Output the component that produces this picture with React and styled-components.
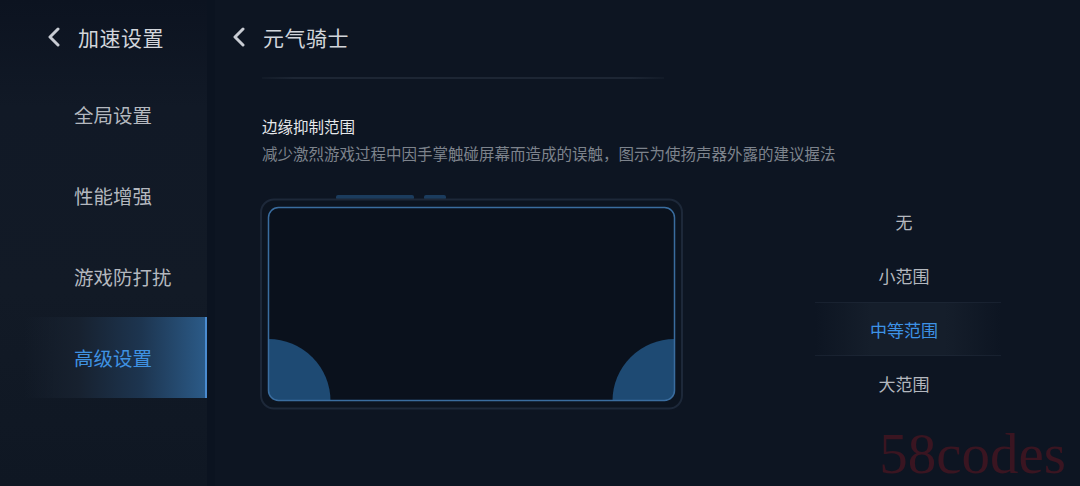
import React, { useState } from "react";
import styled, { createGlobalStyle } from "styled-components";

const GlobalStyle = createGlobalStyle`
  html, body {
    margin: 0;
    padding: 0;
    background: #0d1522;
  }
  body {
    font-family: "Noto Sans CJK SC", "Noto Sans", sans-serif;
  }
`;

const menu = ["全局设置", "性能增强", "游戏防打扰", "高级设置"];
const ranges = ["无", "小范围", "中等范围", "大范围"];

const Chevron = () => (
  <svg width="14" height="20" viewBox="0 0 14 20">
    <path d="M11 2 L3 10 L11 18" fill="none" stroke="#c8ccd3" strokeWidth="3" strokeLinecap="round" strokeLinejoin="round" />
  </svg>
);

const PhoneDiagram = () => (
  <svg width="426" height="216" viewBox="0 0 426 216">
    <defs>
      <clipPath id="screen">
        <rect x="8.5" y="13.5" width="406" height="193" rx="10" />
      </clipPath>
    </defs>
    <rect x="76" y="1" width="78" height="5" rx="2" fill="#1b3c5e" />
    <rect x="164" y="1" width="22" height="5" rx="2" fill="#1b3c5e" />
    <rect x="1" y="5.5" width="421" height="209" rx="13" fill="#0c1420" stroke="#1d2839" strokeWidth="2" />
    <rect x="8.5" y="13.5" width="406" height="193" rx="10" fill="#0a111c" />
    <g clipPath="url(#screen)" fill="#1e4a73">
      <path d="M8.5 145 A62 62 0 0 1 70.5 207 L8.5 207 Z" />
      <path d="M414.5 145 A62 62 0 0 0 352.5 207 L414.5 207 Z" />
    </g>
    <rect x="8.5" y="13.5" width="406" height="193" rx="10" fill="none" stroke="#3a6d9f" strokeWidth="1.5" />
  </svg>
);

export default function App() {
  const [active, setActive] = useState(3);
  const [range, setRange] = useState(2);

  return (
    <Page>
      <GlobalStyle />
      <Sidebar>
        <Header>
          <Chevron />
          <HeaderTitle>加速设置</HeaderTitle>
        </Header>
        {menu.map((label, i) => (
          <NavItem key={label} $active={i === active} onClick={() => setActive(i)}>
            {label}
          </NavItem>
        ))}
      </Sidebar>

      <Main>
        <MainHeader>
          <Chevron />
          <HeaderTitle>元气骑士</HeaderTitle>
        </MainHeader>
        <Content>
          <Divider />
          <SectionTitle>边缘抑制范围</SectionTitle>
          <SectionDesc>减少激烈游戏过程中因手掌触碰屏幕而造成的误触，图示为使扬声器外露的建议握法</SectionDesc>
          <Row>
            <Diagram>
              <PhoneDiagram />
            </Diagram>
            <Options>
              {ranges.map((label, i) => (
                <Option key={label} $selected={i === range} onClick={() => setRange(i)}>
                  {label}
                </Option>
              ))}
            </Options>
          </Row>
        </Content>
      </Main>

      <Watermark>58codes</Watermark>
    </Page>
  );
}

const Page = styled.div`
  position: relative;
  display: flex;
  width: 1080px;
  height: 486px;
  overflow: hidden;
  background: #0d1522;
`;

const Sidebar = styled.div`
  width: 207px;
  flex-shrink: 0;
  display: flex;
  flex-direction: column;
  background: linear-gradient(180deg, #0c1320 0%, #111926 22%, #121a26 60%, #0f1723 100%);
  border-right: 8px solid #0b1320;
`;

const Header = styled.div`
  height: 74px;
  display: flex;
  align-items: center;
  gap: 17px;
  padding-left: 47px;
  box-sizing: border-box;
`;

const MainHeader = styled(Header)`
  padding-left: 25px;
`;

const HeaderTitle = styled.span`
  font-size: 21px;
  color: #d2d5db;
  letter-spacing: 0.5px;
`;

const NavItem = styled.div`
  height: 81px;
  margin-left: 24px;
  padding-left: 50px;
  display: flex;
  align-items: center;
  font-size: 19.5px;
  cursor: pointer;
  color: ${p => (p.$active ? "#3f92e2" : "#b4b8bf")};
  background: ${p => (p.$active ? "linear-gradient(90deg, rgba(24,34,48,0) 0%, #17212f 30%, #1d3550 65%, #2b5a87 100%)" : "transparent")};
  border-right: 2px solid ${p => (p.$active ? "#4a8bd0" : "transparent")};
  box-sizing: border-box;
`;

const Main = styled.div`
  flex: 1;
  display: flex;
  flex-direction: column;
  margin-left: -8px;
`;

const Content = styled.div`
  padding-left: 55px;
  display: flex;
  flex-direction: column;
`;

const Divider = styled.div`
  width: 402px;
  height: 2px;
  margin-top: 3px;
  background: linear-gradient(90deg, rgba(30,39,52,0.3) 0%, #1d2634 8%, #1d2634 92%, rgba(30,39,52,0.3) 100%);
`;

const SectionTitle = styled.div`
  margin-top: 36px;
  font-size: 15.5px;
  line-height: 22px;
  color: #e6e8eb;
`;

const SectionDesc = styled.div`
  margin-top: 5px;
  font-size: 15.5px;
  line-height: 22px;
  color: #7d838c;
`;

const Row = styled.div`
  margin-top: 30px;
  display: flex;
  align-items: flex-start;
`;

const Diagram = styled.div`
  margin-left: -2px;
  display: flex;
`;

const Options = styled.div`
  margin-left: 129px;
  display: flex;
  flex-direction: column;
  width: 186px;
`;

const Option = styled.div`
  height: 54px;
  display: flex;
  align-items: center;
  justify-content: center;
  padding-right: 8px;
  font-size: 17px;
  cursor: pointer;
  color: ${p => (p.$selected ? "#3d93e6" : "#b4b8bf")};
  background: ${p => (p.$selected ? "linear-gradient(90deg, rgba(22,31,45,0) 0%, #151e2b 30%, #151e2b 70%, rgba(22,31,45,0) 100%)" : "transparent")};
  box-shadow: ${p => (p.$selected ? "inset 0 1px 0 rgba(34,44,60,0.5), inset 0 -1px 0 rgba(34,44,60,0.5)" : "none")};
`;

const Watermark = styled.div`
  position: absolute;
  right: 14px;
  bottom: 4px;
  font-family: "Liberation Serif", serif;
  font-size: 57px;
  line-height: 1;
  color: #3a1521;
  pointer-events: none;
`;
